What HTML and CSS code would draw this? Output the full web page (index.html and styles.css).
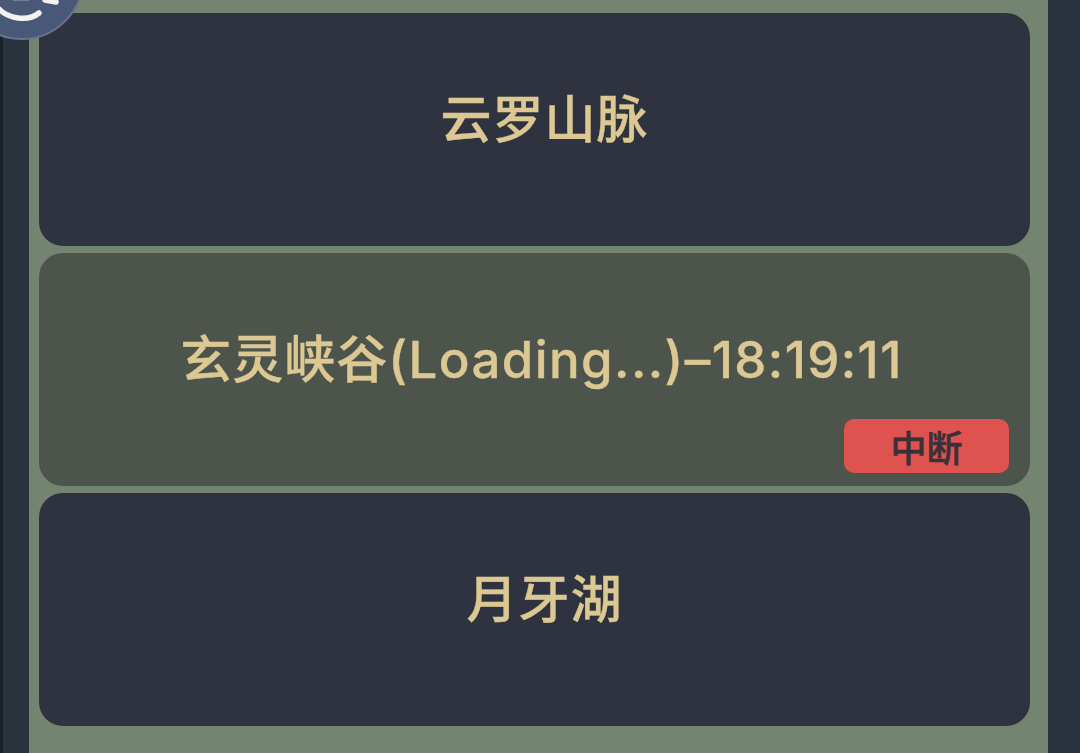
FILE: index.html
```html
<!DOCTYPE html>
<html lang="zh-CN">
<head>
<meta charset="UTF-8">
<meta name="viewport" content="width=device-width, initial-scale=1.0">
<title>地图列表</title>
<link rel="stylesheet" href="styles.css">
</head>
<body>

<div class="panel">
    <div class="card">云罗山脉</div>
    <div class="card card-active">
        <span class="card-title">玄灵峡谷<span class="card-status">(Loading...)–18:19:11</span></span>
        <span class="badge">中断</span>
    </div>
    <div class="card">月牙湖</div>
</div>

<div class="avatar">
    <svg viewBox="0 0 124 124" width="124" height="124">
        <path d="M38 92 C 48 103, 68 106, 79 97" class="avatar-line"/>
        <path d="M85 84 L 96 86" class="avatar-line"/>
        <path d="M54 81.5 L 68 81.5" class="avatar-line"/>
    </svg>
</div>

</body>
</html>
```

FILE: styles.css
```css
body {
    margin: 0;
    height: 753px;
    overflow: hidden;
    background-color: #2a343f;
    border-left: 3px solid #1b2029;
    font-family: Inter, "Noto Sans CJK SC", sans-serif;
}

.panel {
    box-sizing: border-box;
    width: 1019px;
    height: 753px;
    margin-left: 26px;
    padding: 13px 18px 0 10px;
    display: flex;
    flex-direction: column;
    gap: 7px;
    background-color: #738570;
}

.card {
    box-sizing: border-box;
    position: relative;
    height: 233px;
    padding: 0 0 28px 20px;
    display: flex;
    justify-content: center;
    align-items: center;
    border-radius: 24px;
    background-color: #2f3340;
    color: #dcc893;
    font-size: 51px;
    font-weight: 500;
    letter-spacing: 1px;
    -webkit-text-stroke: 0.4px #dcc893;
}

.card-active {
    background-color: #4c544c;
}

.card-title {
    margin-right: 6px;
}

.card-status {
    letter-spacing: 1.4px;
}

.badge {
    position: absolute;
    right: 21px;
    bottom: 13px;
    width: 165px;
    height: 54px;
    display: flex;
    justify-content: center;
    align-items: center;
    border-radius: 10px;
    background-color: #de534f;
    color: #3a3038;
    font-size: 36px;
    letter-spacing: 0;
    -webkit-text-stroke: 0.5px #3a3038;
}

.avatar {
    box-sizing: border-box;
    position: absolute;
    left: -40px;
    top: -84px;
    width: 124px;
    height: 124px;
    border-radius: 50%;
    border: 2px solid #69728f;
    background-color: #4a5878;
    overflow: hidden;
}

.avatar svg {
    display: block;
    margin: -2px;
}

.avatar-line {
    fill: none;
    stroke: #f2f2f2;
    stroke-width: 5.5;
    stroke-linecap: round;
}
```
